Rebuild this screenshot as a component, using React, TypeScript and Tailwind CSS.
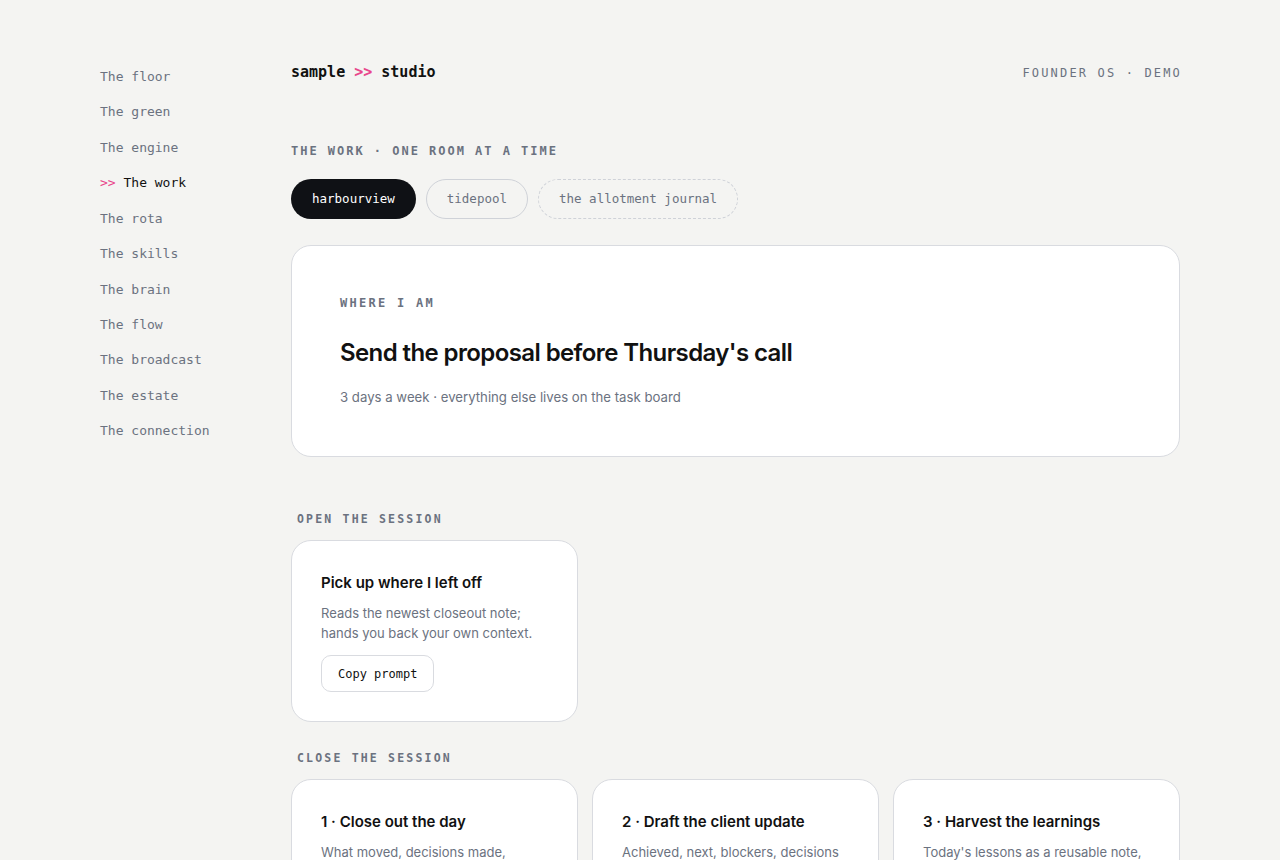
import React from "react";

const mono = "font-['DejaVu_Sans_Mono','Liberation_Mono',monospace]";
const sans = "font-['Inter','Noto_Sans',sans-serif]";

const nav = [
  "The floor",
  "The green",
  "The engine",
  "The work",
  "The rota",
  "The skills",
  "The brain",
  "The flow",
  "The broadcast",
  "The estate",
  "The connection",
];

const closeCards = [
  { title: "1 · Close out the day", body: "What moved, decisions made," },
  { title: "2 · Draft the client update", body: "Achieved, next, blockers, decisions" },
  { title: "3 · Harvest the learnings", body: "Today's lessons as a reusable note," },
];

function Label({ children, className = "" }: { children: React.ReactNode; className?: string }) {
  return (
    <div className={`${mono} text-[11.5px] font-bold tracking-[0.19em] text-[#6b7280] uppercase ${className}`}>
      {children}
    </div>
  );
}

export default function App() {
  return (
    <div className={`min-h-[860px] bg-[#f4f4f2] ${sans}`}>
      <div className="flex px-[100px] pt-[59px]">
        {/* side navigation */}
        <nav className={`${mono} w-[191px] shrink-0 flex flex-col text-[13px]`}>
          {nav.map((n) => (
            <div key={n} className="h-[35.45px] flex items-center">
              {n === "The work" ? (
                <span className="text-[#111]">
                  <span className="text-[#e8478b]">&gt;&gt;</span> {n}
                </span>
              ) : (
                <span className="text-[#6b7280]">{n}</span>
              )}
            </div>
          ))}
        </nav>

        <main className="flex-1 min-w-0">
          <header className="flex items-center justify-between h-[26px]">
            <div className={`${mono} text-[15px] font-bold text-[#111]`}>
              sample <span className="text-[#e8478b]">&gt;&gt;</span> studio
            </div>
            <div className={`${mono} text-[12px] tracking-[0.18em] text-[#6b7280] mr-[-2px] mt-[2px]`}>FOUNDER OS · DEMO</div>
          </header>

          <Label className="mt-[57px] text-[12px] tracking-[0.165em]">The work · one room at a time</Label>

          <div className={`${mono} mt-[19px] flex gap-[10px] text-[12.5px]`}>
            <div className="h-[40px] px-[21px] rounded-full bg-[#0f1115] text-white flex items-center">harbourview</div>
            <div className="h-[40px] px-[20px] rounded-full border border-[#cfd2d8] text-[#6b7280] flex items-center">tidepool</div>
            <div className="h-[40px] px-[20px] rounded-full border border-dashed border-[#cfd2d8] text-[#6b7280] flex items-center">the allotment journal</div>
          </div>

          <section className="mt-[26px] h-[212px] rounded-[20px] border border-[#d9dbe0] bg-white px-[48px] pt-[48px]">
            <Label className="text-[12px] tracking-[0.2em]">Where I am</Label>
            <h1 className="mt-[25px] text-[24px] leading-[32px] font-semibold tracking-[-0.025em] text-[#111]">
              Send the proposal before Thursday's call
            </h1>
            <p className="mt-[19px] text-[13.2px] text-[#6b7280]">3 days a week · everything else lives on the task board</p>
          </section>

          <Label className="mt-[54px] ml-[6px]">Open the session</Label>
          <div className="mt-[12px] grid grid-cols-3 gap-[14px]">
            <div className="h-[182px] rounded-[20px] border border-[#d9dbe0] bg-white px-[29px] pt-[31px]">
              <h2 className="text-[15px] leading-[22px] font-semibold text-[#111]">Pick up where I left off</h2>
              <p className="mt-[9px] text-[13px] leading-[20px] text-[#6b7280]">
                Reads the newest closeout note; hands you back your own context.
              </p>
              <button className={`${mono} mt-[12px] h-[37px] px-[16px] rounded-[10px] border border-[#d9dbe0] text-[12px] text-[#111] bg-white`}>
                Copy prompt
              </button>
            </div>
          </div>

          <Label className="mt-[28px] ml-[6px]">Close the session</Label>
          <div className="mt-[11px] grid grid-cols-3 gap-[14px]">
            {closeCards.map((c) => (
              <div key={c.title} className="h-[182px] rounded-[20px] border border-[#d9dbe0] bg-white px-[29px] pt-[31px]">
                <h2 className="text-[15px] leading-[22px] font-semibold text-[#111]">{c.title}</h2>
                <p className="mt-[9px] text-[13px] leading-[20px] text-[#6b7280]">{c.body}</p>
              </div>
            ))}
          </div>
        </main>
      </div>
    </div>
  );
}
